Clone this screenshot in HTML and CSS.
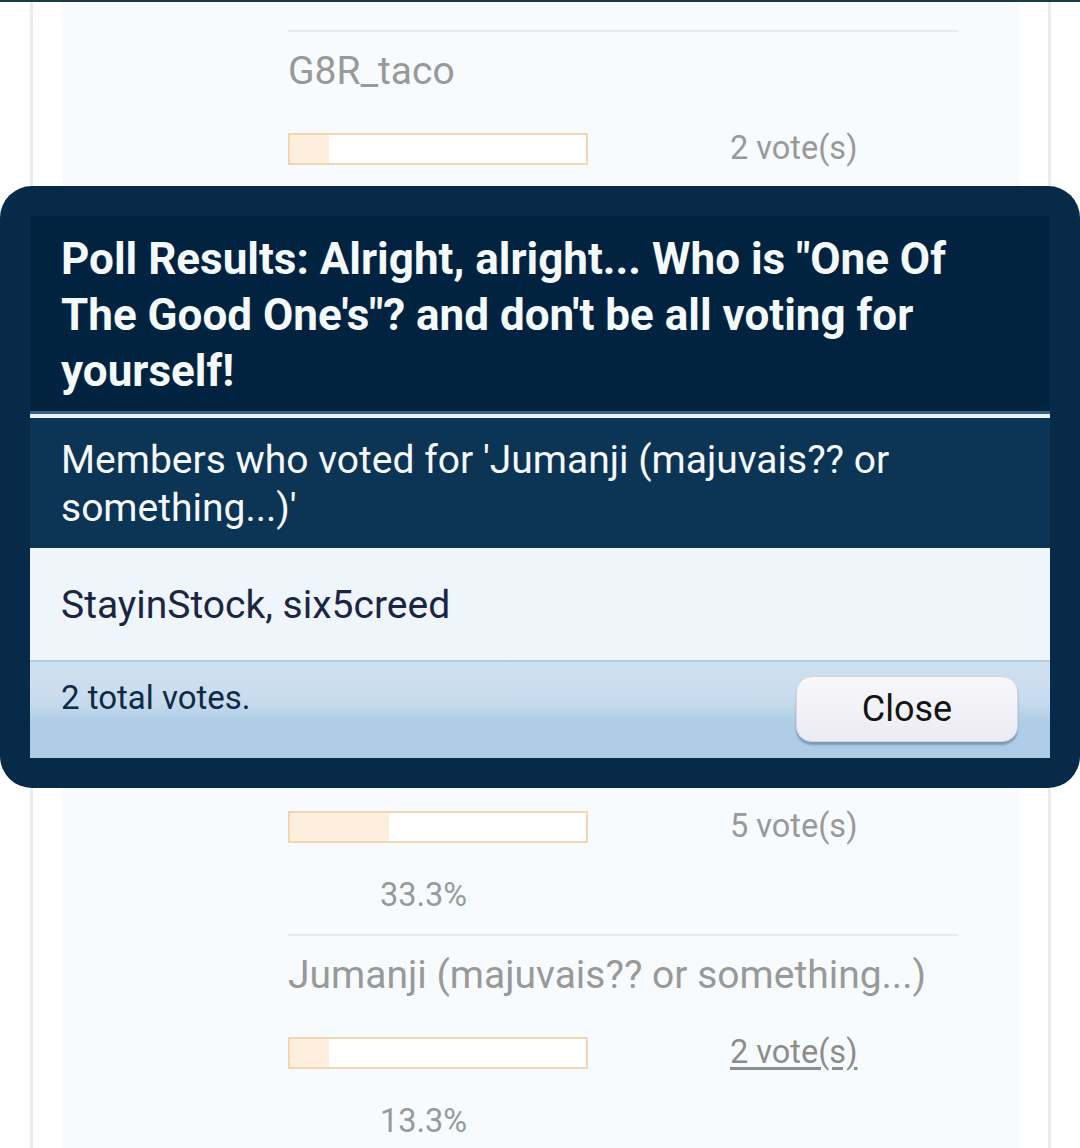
FILE: index.html
```html
<!DOCTYPE html>
<html lang="en">
<head>
<meta charset="utf-8">
<title>Poll Results</title>
<link rel="stylesheet" href="styles.css">
</head>
<body>
<div class="page">
  <div class="content">
    <div class="poll-list">
      <div class="item item-first">
        <div class="percent">26.7%</div>
      </div>
      <div class="item">
        <div class="name">G8R_taco</div>
        <div class="bar-row">
          <div class="bar"><div class="fill" style="width:13.3%"></div></div>
          <div class="votes">2 vote(s)</div>
        </div>
        <div class="percent covered">13.3%</div>
      </div>
      <div class="item covered">
        <div class="name">StayinStock</div>
        <div class="bar-row">
          <div class="bar"><div class="fill" style="width:6.7%"></div></div>
          <div class="votes">1 vote(s)</div>
        </div>
        <div class="percent">6.7%</div>
      </div>
      <div class="item covered">
        <div class="name">six5creed</div>
        <div class="bar-row">
          <div class="bar"><div class="fill" style="width:6.7%"></div></div>
          <div class="votes">1 vote(s)</div>
        </div>
        <div class="percent">6.7%</div>
      </div>
      <div class="item">
        <div class="name covered">Ferngully</div>
        <div class="bar-row">
          <div class="bar"><div class="fill" style="width:33.3%"></div></div>
          <div class="votes">5 vote(s)</div>
        </div>
        <div class="percent">33.3%</div>
      </div>
      <div class="item">
        <div class="name">Jumanji (majuvais?? or something...)</div>
        <div class="bar-row">
          <div class="bar"><div class="fill" style="width:13.3%"></div></div>
          <div class="votes"><span class="link">2 vote(s)</span></div>
        </div>
        <div class="percent">13.3%</div>
      </div>
    </div>
  </div>
</div>

<div class="modal">
  <div class="modal-inner">
    <div class="modal-header">Poll Results: Alright, alright... Who is "One Of The Good One's"? and don't be all voting for yourself!</div>
    <div class="modal-sub">Members who voted for 'Jumanji (majuvais?? or something...)'</div>
    <div class="modal-body">StayinStock, six5creed</div>
    <div class="modal-footer">
      <div class="total">2 total votes.</div>
      <button class="close-btn" type="button">Close</button>
    </div>
  </div>
</div>
</body>
</html>
```

FILE: styles.css
```css
html, body {
  margin: 0;
  padding: 0;
}
body {
  background: #ffffff;
  font-family: Roboto, "Noto Sans", "Liberation Sans", sans-serif;
  border-top: 2px solid #1d3a4b;
  height: 1146px;
  overflow: hidden;
  position: relative;
}
.page {
  margin: 0 29px 0 30px;
  border-left: 3px solid #e6eef3;
  border-right: 3px solid #e6eef3;
  padding: 0 29px;
  height: 100%;
}
.content {
  background: #f7fbfe;
  height: 100%;
  padding: 0 61px 0 226px;
  display: flow-root;
  overflow: hidden;
}
.poll-list {
  margin-top: -29px;
}
.item {
  border-top: 2px solid #e4ebf1;
  padding-bottom: 21px;
}
.item-first {
  border-top: none;
}
.covered {
  visibility: hidden;
}
.item.covered {
  visibility: visible;
}
.item.covered > * {
  visibility: hidden;
}
.name {
  margin-top: 15px;
  font-size: 39px;
  line-height: 48px;
  color: #999999;
  white-space: nowrap;
}
.bar-row {
  margin-top: 38px;
  display: flex;
  align-items: center;
  height: 32px;
}
.bar {
  box-sizing: border-box;
  width: 300px;
  height: 32px;
  border: 2px solid #f1d8b2;
  background: #ffffff;
}
.fill {
  height: 100%;
  background: #fdeedd;
}
.votes {
  margin-left: 142px;
  margin-bottom: 3px;
  font-size: 32.5px;
  color: #999999;
  line-height: 36px;
}
.link {
  color: #8d8d8d;
  text-decoration: underline;
  text-underline-offset: 4px;
}
.percent {
  margin-top: 34px;
  padding-left: 92px;
  font-size: 32.5px;
  line-height: 36px;
  color: #999999;
}
.item-first .percent {
  margin-top: 0;
}

/* modal overlay */
.modal {
  position: absolute;
  top: 184px;
  left: 0;
  width: 1080px;
  box-sizing: border-box;
  padding: 30px;
  background: #062a47;
  border-radius: 32px;
}
.modal-inner {
  display: flex;
  flex-direction: column;
}
.modal-header {
  background: #02233f;
  color: #f4f9fc;
  font-weight: 700;
  font-size: 44px;
  line-height: 56px;
  padding: 15px 30px 12px 31px;
  border-bottom: 3px solid #37627f;
}
.modal-sub {
  background: #0c3455;
  border-top: 4px solid #e8f1f7;
  color: #f4f8fb;
  font-size: 39px;
  line-height: 48px;
  padding: 18px 30px 16px 31px;
}
.modal-body {
  background: #eef5fb;
  color: #1c2541;
  font-size: 39px;
  line-height: 48px;
  padding: 33px 31px 31px 31px;
}
.modal-footer {
  border-top: 2px solid #b3cde2;
  background: linear-gradient(to bottom, #cfe0ef 0%, #c9dcee 40%, #b0cde6 62%, #aecce6 100%);
  display: flex;
  justify-content: space-between;
  align-items: flex-start;
  padding: 14px 32px 16px 31px;
}
.total {
  font-size: 33px;
  line-height: 44px;
  color: #0f2a45;
}
.close-btn {
  width: 222px;
  height: 66px;
  border: 1px solid #d3d7e1;
  border-radius: 16px;
  background: linear-gradient(to bottom, #f8f8fb 0%, #ebebf2 100%);
  box-shadow: 0 3px 2px rgba(40, 60, 90, 0.35);
  font-family: Roboto, "Noto Sans", "Liberation Sans", sans-serif;
  font-size: 36px;
  color: #141414;
  padding: 0;
}
```
